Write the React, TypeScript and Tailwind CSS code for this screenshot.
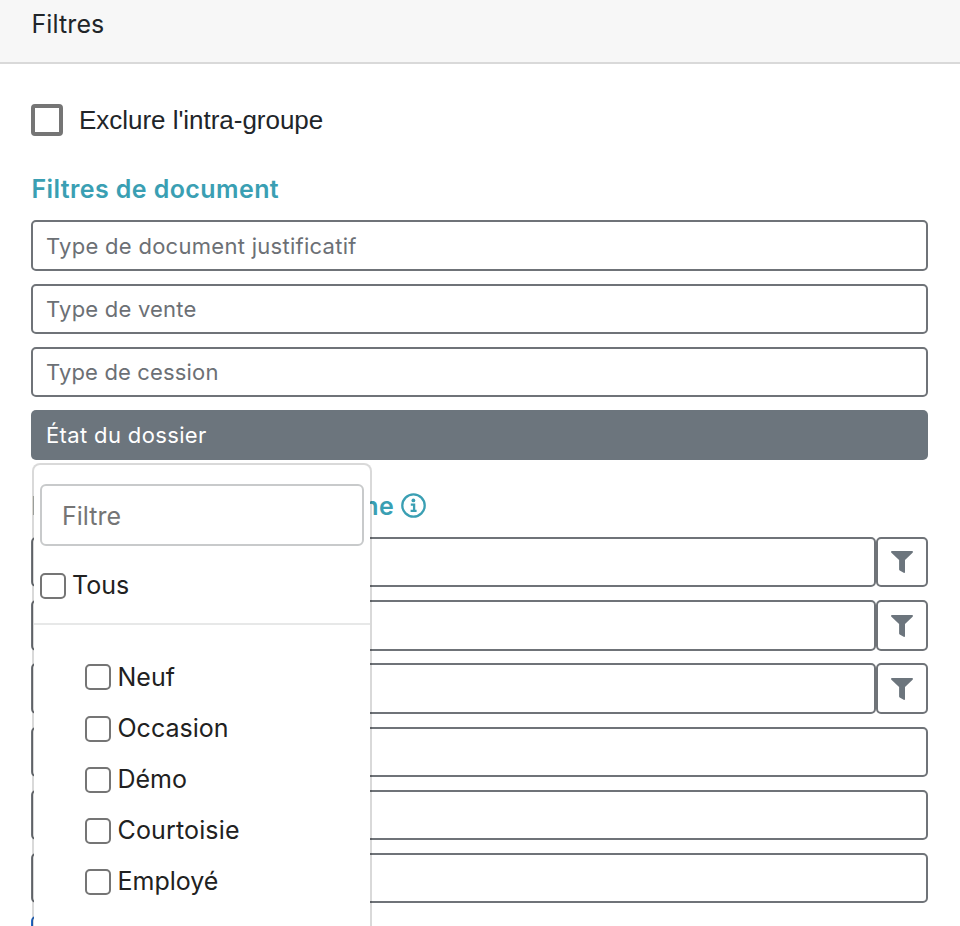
import React from "react";

const documentFilters = [
  { label: "Type de document justificatif", size: "h-[51px] pt-px tracking-[0.28px]" },
  { label: "Type de vente", size: "h-[50px] tracking-[0.22px]" },
  { label: "Type de cession", size: "h-[50px] tracking-[0.15px]" },
];

const columnFilters = [
  { size: "h-[50px] mb-[13px]", funnel: true },
  { size: "h-[51px] mb-[12px]", funnel: true },
  { size: "h-[51px] mb-[13px]", funnel: true },
  { size: "h-[50px] mb-[13px]", funnel: false },
  { size: "h-[50px] mb-[13px]", funnel: false },
  { size: "h-[50px] mb-[13px]", funnel: false },
];

const states = [
  { label: "Neuf", text: "pt-0.5", gap: "mb-[26px]" },
  { label: "Occasion", text: "", gap: "mb-[25px]" },
  { label: "Démo", text: "", gap: "mb-[25px]" },
  { label: "Courtoisie", text: "tracking-[0.15px]", gap: "mb-[25px]" },
  { label: "Employé", text: "", gap: "mb-[25px]" },
];

function Funnel() {
  return (
    <svg width="22" height="22" viewBox="0 0 22 22" fill="#6c757d">
      <path d="M1 0H21C22 0 22.3 1 21.6 1.7L14 9.1V21.2C14 21.9 13.3 22.2 12.7 21.8L8.7 19.4C8.3 19.1 8.1 18.8 8.1 18.4V9.1L.4 1.7C-.3 1 0 0 1 0Z" />
    </svg>
  );
}

function InfoIcon() {
  return (
    <svg className="-mt-0.5" width="25" height="25" viewBox="0 0 25 25" fill="none" stroke="#3a9fb3">
      <circle cx="12.5" cy="12.5" r="11.2" strokeWidth="2.3" />
      <circle cx="12.4" cy="7.4" r="1.9" fill="#3a9fb3" stroke="none" />
      <path d="M9.8 11.6H13.1V18M9.6 17.9H15.6" strokeWidth="2.3" />
    </svg>
  );
}

function Checkbox() {
  return <span className="size-[26px] shrink-0 rounded-[5px] border-2 border-[#757575] bg-white" />;
}

export default function App() {
  return (
    <div className="h-[926px] w-[960px] overflow-hidden bg-white font-['Inter',sans-serif] text-[#212529]">
      <header className="h-16 border-b-2 border-[#d9d9d9] bg-[#f7f7f7] pl-[31.5px] pt-[8px] text-[25px] leading-[32px] tracking-[0.1px]">
        Filtres
      </header>
      <main className="flex flex-col pl-[31px] pr-8 pt-10">
        <label className="flex h-8 items-center gap-[16px] font-['Liberation_Sans',sans-serif] text-[26px] leading-8 tracking-[-0.03px]">
          <span className="size-8 rounded-[4px] border-4 border-[#757575]" />
          Exclure l'intra-groupe
        </label>
        <h2 className="mb-[15px] ml-[0.5px] mt-[37px] h-8 text-[25px] font-semibold leading-8 tracking-[0.4px] text-[#3a9fb3]">
          Filtres de document
        </h2>
        <div className="flex flex-col gap-[13px]">
          {documentFilters.map((f) => (
            <div
              key={f.label}
              className={`${f.size} flex items-center rounded-[5px] border-2 border-[#6f7378] pl-[13px] text-[22px] text-[#6c7075]`}
            >
              {f.label}
            </div>
          ))}
          <div className="relative flex h-[50px] items-center rounded-[5px] bg-[#6c757d] pl-[15px] text-[22px] tracking-[0.36px] text-white">
            État du dossier
            <div className="absolute left-px top-[53px] z-10 flex h-[520px] w-[340px] flex-col rounded-[8px] border-2 border-black/15 bg-white bg-clip-padding text-[25px] tracking-normal text-[#212121]">
              <div className="ml-[6px] mt-[19px] flex h-[62px] w-[324px] items-center rounded-[6px] border-2 border-[#c8cacb] pl-5 pt-[3px] text-[#757575]">
                Filtre
              </div>
              <label className="ml-[6px] mt-[27px] flex h-[26px] items-center gap-[6px]">
                <Checkbox />
                Tous
              </label>
              <div className="mb-[39px] mt-6 h-[2px] bg-[#e7e8e8]" />
              {states.map((s) => (
                <label key={s.label} className={`${s.gap} ml-[51px] flex h-[26px] shrink-0 items-center gap-[6.5px]`}>
                  <Checkbox />
                  <span className={s.text}>{s.label}</span>
                </label>
              ))}
            </div>
          </div>
        </div>
        <div className="mb-[15px] mt-[30px] flex h-8 items-center gap-[7px]">
          <h2 className="flex w-[363px] justify-between pl-[0.5px] text-[25px] font-semibold leading-8 tracking-[0.3px] text-[#3a9fb3]">
            <span>F</span>
            <span>ne</span>
          </h2>
          <InfoIcon />
        </div>
        {columnFilters.map((f, i) => (
          <div key={i} className={`${f.size} flex`}>
            <div className="flex-1 rounded-[5px] border-2 border-[#6f7378]" />
            {f.funnel && (
              <div className="flex w-[52px] items-center justify-center rounded-[5px] border-2 border-[#6f7378]">
                <Funnel />
              </div>
            )}
          </div>
        ))}
        <div className="h-[50px] w-[200px] shrink-0 rounded-[5px] border-2 border-[#2468c5]" />
      </main>
    </div>
  );
}
